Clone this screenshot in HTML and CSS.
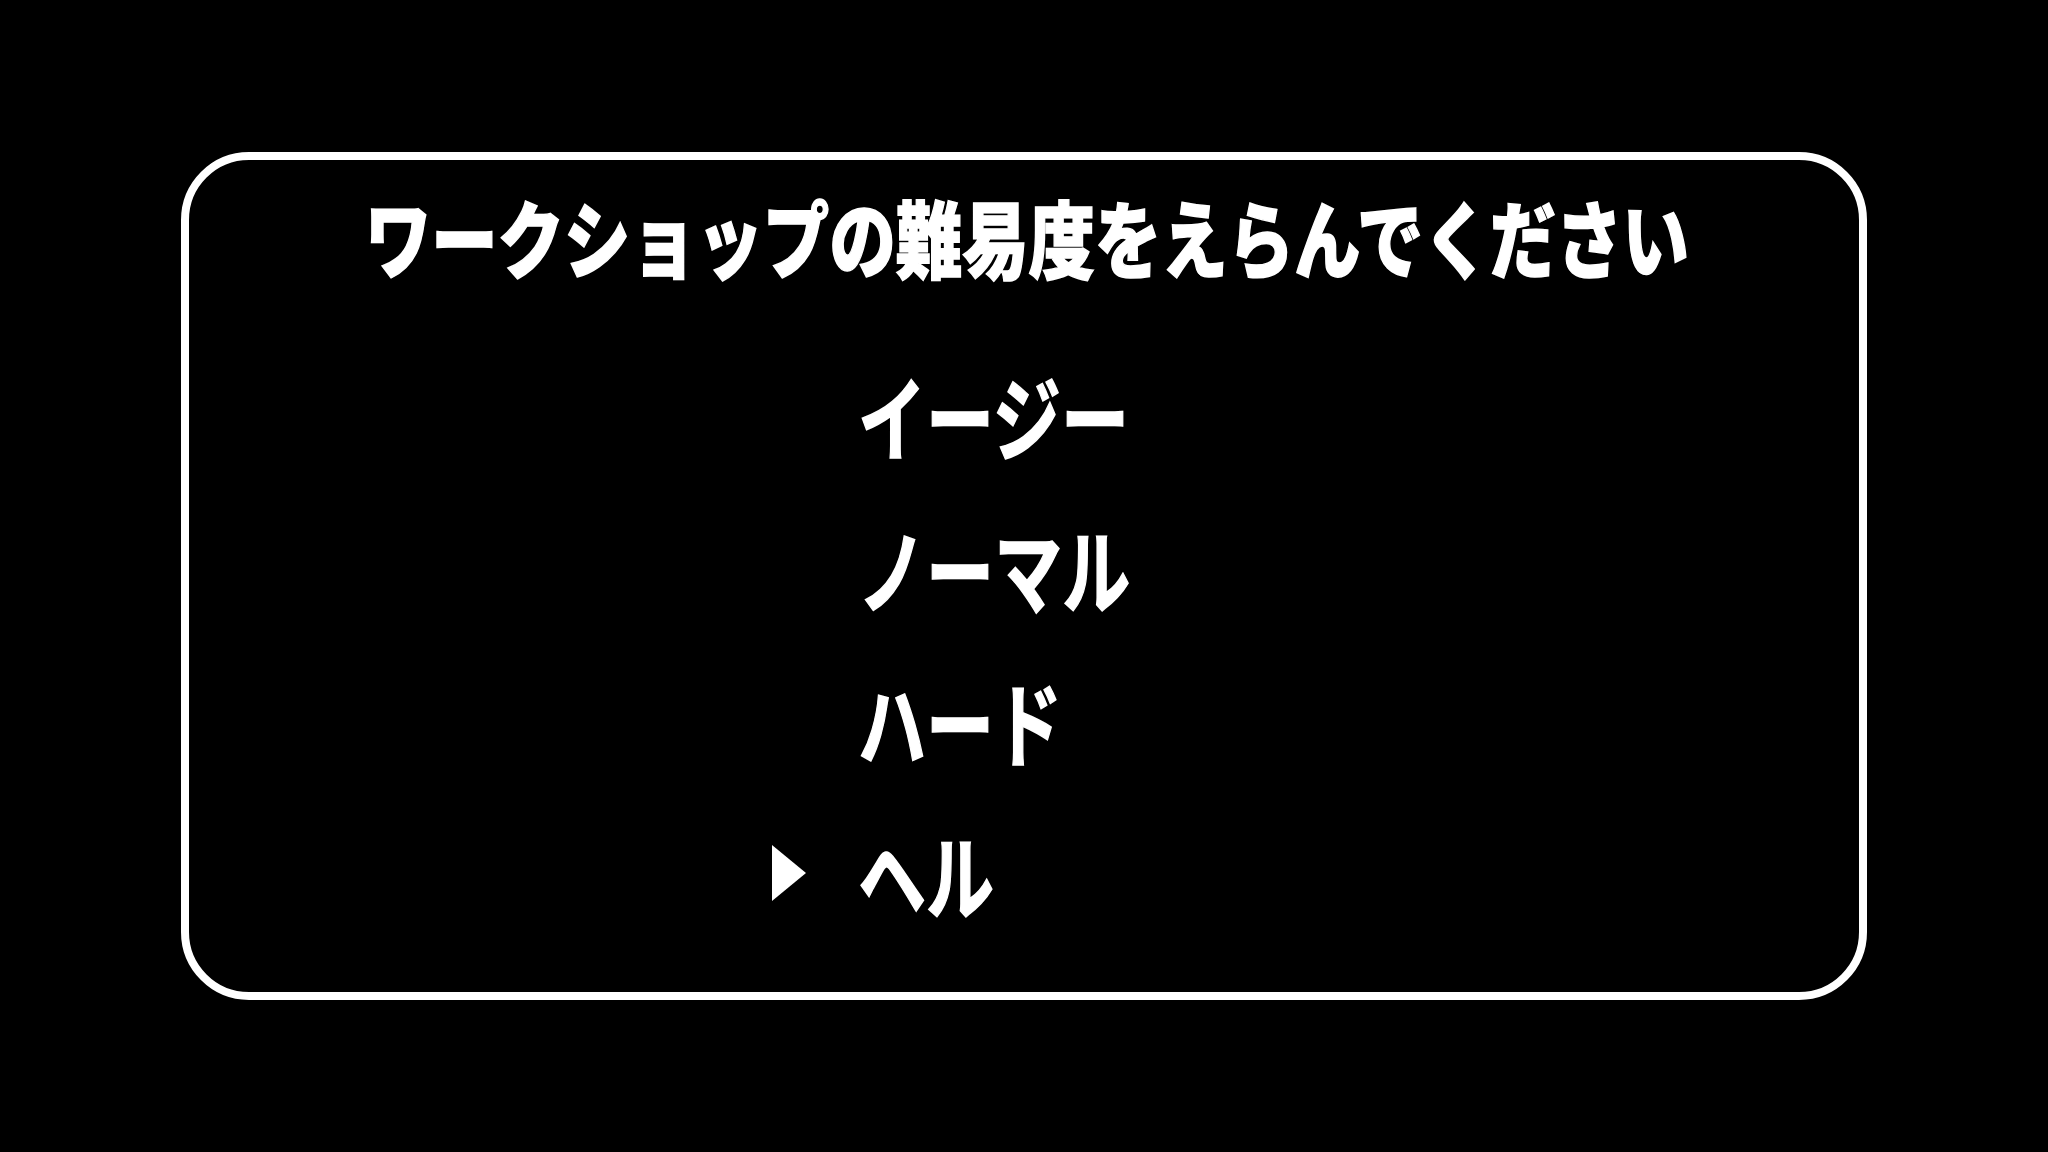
FILE: index.html
```html
<!DOCTYPE html>
<html lang="ja">
<head>
<meta charset="utf-8">
<title>難易度選択</title>
<link rel="stylesheet" href="styles.css">
</head>
<body>
<div class="frame">
  <h1 class="title"><span class="squeeze">ワークショップの難易度をえらんでください</span></h1>
  <ul class="menu">
    <li class="opt"><span class="cursor"></span><span class="label">イージー</span></li>
    <li class="opt"><span class="cursor"></span><span class="label">ノーマル</span></li>
    <li class="opt"><span class="cursor"></span><span class="label">ハード</span></li>
    <li class="opt selected"><span class="cursor"></span><span class="label">ヘル</span></li>
  </ul>
</div>
</body>
</html>
```
FILE: styles.css
```css
html, body {
  margin: 0;
  padding: 0;
  background: #000;
  width: 2048px;
  height: 1152px;
  overflow: hidden;
}
body {
  padding-top: 152px;
  box-sizing: border-box;
  font-family: "Noto Sans CJK JP", "Noto Sans", sans-serif;
  color: #fff;
}
.frame {
  box-sizing: border-box;
  width: 1686px;
  height: 848px;
  margin: 0 auto;
  border: 8px solid #fff;
  border-radius: 68px;
  padding-top: 26px;
}
.title {
  margin: 0;
  height: 100px;
  line-height: 100px;
  font-size: 84px;
  font-weight: 900;
  text-align: center;
  white-space: nowrap;
}
.squeeze {
  display: inline-block;
  transform: scaleX(0.79);
  transform-origin: center;
  -webkit-text-stroke: 1.5px #fff;
}
.menu {
  list-style: none;
  margin: 51px 0 0 0;
  padding: 0 0 0 583px;
  display: flex;
  flex-direction: column;
}
.opt {
  display: flex;
  align-items: center;
  height: 153px;
}
.cursor {
  width: 86px;
  flex: none;
  display: flex;
  align-items: center;
}
.selected .cursor::before {
  content: "";
  display: block;
  width: 0;
  height: 0;
  border-left: 34px solid #fff;
  border-top: 28px solid transparent;
  border-bottom: 28px solid transparent;
}
.label {
  display: inline-block;
  font-size: 92px;
  line-height: 153px;
  font-weight: 700;
  transform: scaleX(0.74);
  transform-origin: left center;
  white-space: nowrap;
  -webkit-text-stroke: 1.5px #fff;
}
```
